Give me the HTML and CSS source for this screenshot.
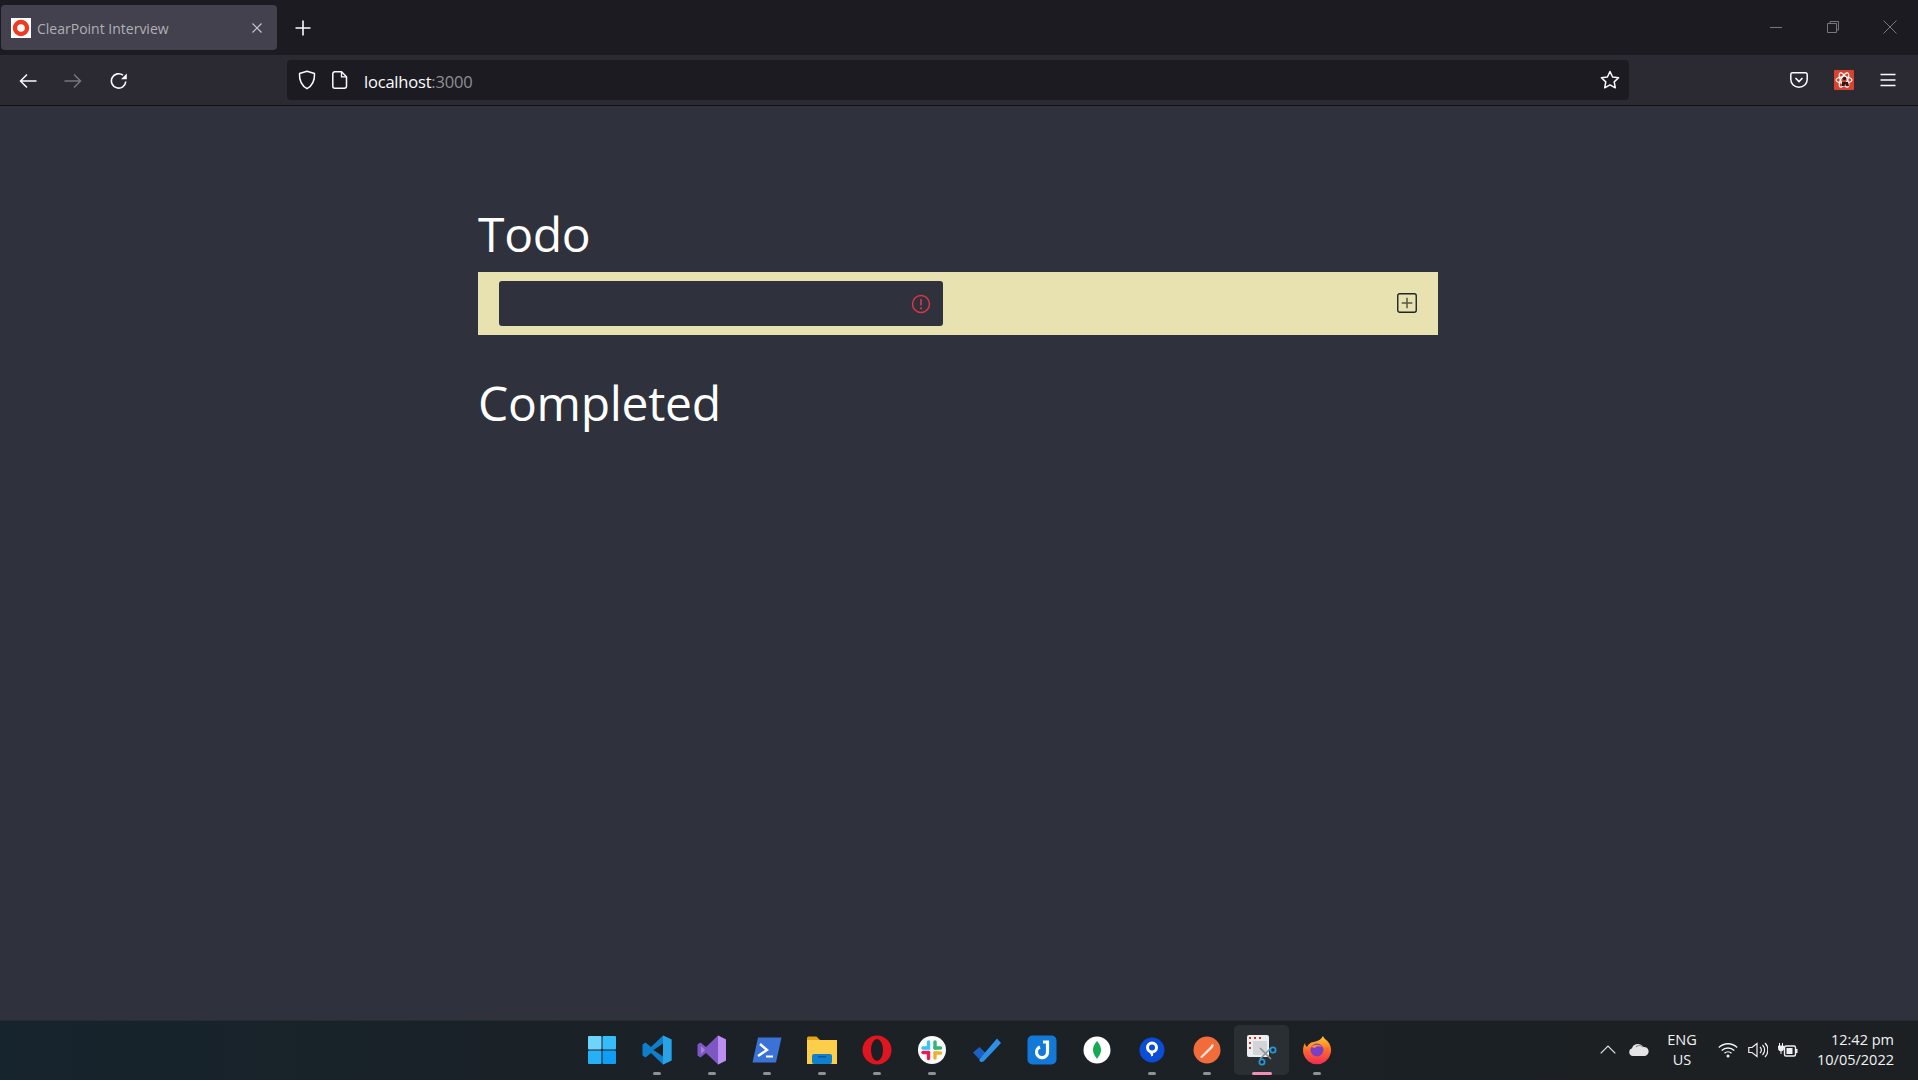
FILE: index.html
```html
<!DOCTYPE html>
<html lang="en">
<head>
<meta charset="utf-8">
<title>ClearPoint Interview</title>
<link rel="stylesheet" href="styles.css">
</head>
<body>
<div class="window">
  <header class="tabbar">
    <div class="tab">
      <span class="favicon"><svg width="20" height="20" viewBox="0 0 20 20"><rect width="20" height="20" fill="#fff"/><circle cx="10" cy="10" r="6" fill="none" stroke="#ee3a1f" stroke-width="4.4"/></svg></span>
      <span class="tab-title">ClearPoint Interview</span>
      <svg class="tab-close" width="12" height="12" viewBox="0 0 12 12"><path d="M1.5 1.5l9 9M10.5 1.5l-9 9" stroke="#c8c8cc" stroke-width="1.2"/></svg>
    </div>
    <svg class="new-tab" width="16" height="16" viewBox="0 0 16 16"><path d="M8 .5v15M.5 8h15" stroke="#fbfbfe" stroke-width="1.6"/></svg>
    <div class="window-controls">
      <svg width="14" height="14" viewBox="0 0 14 14"><path d="M1 7.5h12" stroke="#77777b" stroke-width="1"/></svg>
      <svg width="14" height="14" viewBox="0 0 14 14"><path d="M1.500 3.500h9v9h-9zM4 3.500V1.500h8.500v8.500h-2" fill="none" stroke="#77777b" stroke-width="1"/></svg>
      <svg width="14" height="14" viewBox="0 0 14 14"><path d="M.5.500l13 13M13.500.500l-13 13" stroke="#77777b" stroke-width="1"/></svg>
    </div>
  </header>
  <nav class="toolbar">
    <div class="nav-buttons">
      <svg width="18" height="16" viewBox="0 0 18 16"><path d="M17.500 8H1.500M8 1.500L1.500 8 8 14.500" fill="none" stroke="#fbfbfe" stroke-width="1.500"/></svg>
      <svg width="18" height="16" viewBox="0 0 18 16"><path d="M.5 8h16M10 1.500L16.500 8 10 14.500" fill="none" stroke="#77767c" stroke-width="1.500"/></svg>
      <svg class="reload" width="18" height="18" viewBox="0 0 18 18"><path d="M15.800 9.500A7.200 7.200 0 1 1 13 3.200" fill="none" stroke="#fbfbfe" stroke-width="1.600"/><path d="M16.800 1.500v5.800h-5.800z" fill="#fbfbfe"/></svg>
    </div>
    <div class="urlbar">
      <svg class="url-shield" width="18" height="20" viewBox="0 0 18 20"><path d="M9 1.200l7.500 2.300c.3 6.800-1.800 12-7.500 15.200C3.300 15.500 1.200 10.300 1.500 3.500z" fill="none" stroke="#fbfbfe" stroke-width="1.500" stroke-linejoin="round"/></svg>
      <svg class="url-doc" width="16" height="18" viewBox="0 0 16 18"><path d="M2.800.8h6.700l5 5v9.400a2 2 0 0 1-2 2H2.800a2 2 0 0 1-2-2V2.800a2 2 0 0 1 2-2z" fill="none" stroke="#fbfbfe" stroke-width="1.500"/><path d="M9.500.8v5h5" fill="none" stroke="#fbfbfe" stroke-width="1.300"/></svg>
      <span class="url-text">localhost<span class="url-port">:3000</span></span>
      <svg class="url-star" width="20" height="20" viewBox="0 0 20 20"><path d="M10 1.500l2.600 5.500 6 .8-4.400 4.100 1.100 5.900-5.300-2.900-5.300 2.900 1.100-5.900L1.400 7.800l6-.8z" fill="none" stroke="#fbfbfe" stroke-width="1.500" stroke-linejoin="round"/></svg>
    </div>
    <div class="toolbar-actions">
      <svg width="18" height="16" viewBox="0 0 18 16"><path d="M2.500.8h13a1.700 1.700 0 0 1 1.700 1.700v5a8.200 7.700 0 0 1-16.400 0v-5A1.700 1.700 0 0 1 2.500.8z" fill="none" stroke="#fbfbfe" stroke-width="1.500"/><path d="M5.500 6L9 9.500 12.500 6" fill="none" stroke="#fbfbfe" stroke-width="1.600"/></svg>
      <svg width="20" height="20" viewBox="0 0 20 20"><rect width="20" height="20" rx="1" fill="#d9422f"/><g fill="none" stroke="#fff" stroke-width="1.200"><ellipse cx="10" cy="10" rx="8" ry="3.200"/><ellipse cx="10" cy="10" rx="8" ry="3.200" transform="rotate(60 10 10)"/><ellipse cx="10" cy="10" rx="8" ry="3.200" transform="rotate(-60 10 10)"/></g><circle cx="10.500" cy="8.500" r="1.800" fill="#2a1a1a"/><path d="M8 12h6l1 4h-2.500l-1-2-1 2H8z" fill="#2a1a1a"/></svg>
      <svg width="16" height="14" viewBox="0 0 16 14"><path d="M.5 1.500h15M.5 7h15M.5 12.500h15" stroke="#fbfbfe" stroke-width="1.500"/></svg>
    </div>
  </nav>
  <main class="page">
    <section class="content">
      <h1 class="heading">Todo</h1>
      <form class="todo-row">
        <div class="todo-input">
          <svg width="20" height="20" viewBox="0 0 20 20"><circle cx="10" cy="10" r="8.500" fill="none" stroke="#dc3545" stroke-width="1.500"/><path d="M10 5v6.500" stroke="#dc3545" stroke-width="1.700"/><circle cx="10" cy="14.300" r="1.100" fill="#dc3545"/></svg>
        </div>
        <svg class="add-icon" width="20" height="20" viewBox="0 0 20 20"><rect x=".75" y=".75" width="18.500" height="18.500" rx="2" fill="none" stroke="#212529" stroke-width="1.400"/><path d="M10 4.700v10.600M4.700 10h10.600" stroke="#55554c" stroke-width="1.500"/></svg>
      </form>
      <h1 class="heading completed">Completed</h1>
    </section>
  </main>
  <footer class="taskbar">
    <div class="task-icons">
      <div class="task"><svg width="30" height="30" viewBox="0 0 30 30"><rect x="1" y="1" width="13.500" height="13.500" rx="1" fill="#6fd4fb"/><rect x="15.500" y="1" width="13.500" height="13.500" rx="1" fill="#35bdf9"/><rect x="1" y="15.500" width="13.500" height="13.500" rx="1" fill="#28b0f7"/><rect x="15.500" y="15.500" width="13.500" height="13.500" rx="1" fill="#109ef5"/></svg></div>
      <div class="task open"><svg width="30" height="30" viewBox="0 0 30 30"><path d="M21 .5L29.500 4.500v21L21 29.500 9 18 3.500 22.500.5 20.500v-11L3.500 7.500 9 12z" fill="#0f7fc9"/><path d="M21 .5l8.500 4v21l-8.500 4z" fill="#29a3e8"/><path d="M21 8.500L11.500 15l9.500 6.500z" fill="#1c1f24"/></svg></div>
      <div class="task open"><svg width="30" height="30" viewBox="0 0 30 30"><path d="M21 .5L29 4.500v21l-8 4L9 18 3.500 22.500.5 20.500v-11L3.500 7.500 9 12z" fill="#7d57c2"/><path d="M21 .5l8 4v21l-8 4z" fill="#bb8ef0"/><path d="M21 9l-7 6 7 6z" fill="#7d57c2"/><path d="M4 11l4 4-4 4z" fill="#a77fe0"/></svg></div>
      <div class="task open"><svg width="30" height="26" viewBox="0 0 30 26"><path d="M6 .5h23.500L24 25.500H.5z" fill="#3a72d6"/><path d="M8 7l7 6-9 6" fill="none" stroke="#fff" stroke-width="2.400"/><path d="M14 19.500h7" stroke="#fff" stroke-width="2"/></svg></div>
      <div class="task open"><svg width="30" height="28" viewBox="0 0 30 28"><path d="M0 2a1.500 1.500 0 0 1 1.500-1.500h8L13 4h17v24H0z" fill="#e2a513"/><rect y="4" width="30" height="24" fill="#fcce4a"/><rect x="5" y="18" width="20" height="10" rx="2" fill="#0f80cf"/><rect x="11" y="20" width="8" height="1.500" fill="#0a5a9a"/></svg></div>
      <div class="task open"><svg width="30" height="30" viewBox="0 0 30 30"><circle cx="15" cy="15" r="14.500" fill="#e0151f"/><ellipse cx="15" cy="15" rx="6" ry="11" fill="#1c1f24"/></svg></div>
      <div class="task open"><svg width="30" height="30" viewBox="0 0 30 30"><circle cx="15" cy="15" r="14" fill="#fbfbfb"/><g stroke-width="3.400" stroke-linecap="round"><path d="M11.500 7v6H6" stroke="#36c5f0" fill="none"/><path d="M18 7v6" stroke="#2eb67d"/><path d="M18 13h5.500" stroke="#2eb67d"/><path d="M18 18h5.500" stroke="#ecb22e"/><path d="M18 18v5" stroke="#ecb22e"/><path d="M11.500 17.500v6" stroke="#e01e5a"/><path d="M6 17.500h5.500" stroke="#e01e5a"/></g></svg></div>
      <div class="task"><svg width="30" height="26" viewBox="0 0 30 26"><path d="M1 15.500L7.500 10l6 6-6.500 6z" fill="#1e5fc4"/><path d="M7.500 22L25 1.500l4 4.500L12 24a3 3 0 0 1-4.500 0z" fill="#2d8fe6"/></svg></div>
      <div class="task"><svg width="30" height="30" viewBox="0 0 30 30"><rect x=".5" y=".5" width="29" height="29" rx="5" fill="#1279d8"/><path d="M16 7h4.500v10a5.500 5.500 0 1 1-7.500-5" fill="none" stroke="#fff" stroke-width="3.200"/></svg></div>
      <div class="task"><svg width="28" height="28" viewBox="0 0 28 28"><circle cx="14" cy="14" r="13.500" fill="#fff"/><path d="M14 5c3 3.500 4.200 6.500 4 9.500-.2 3.500-2.500 6-4 8.500-1.500-2.500-3.800-5-4-8.500C9.800 11.500 11 8.500 14 5z" fill="#13aa52"/></svg></div>
      <div class="task open"><svg width="26" height="26" viewBox="0 0 26 26"><circle cx="13" cy="13" r="12.500" fill="#0b4dd6"/><circle cx="13" cy="10.500" r="4.500" fill="none" stroke="#fff" stroke-width="3"/><path d="M10.500 15l2.500 5v-5z" fill="#fff"/><path d="M12 14h2v5h-2z" fill="#fff"/></svg></div>
      <div class="task open"><svg width="28" height="28" viewBox="0 0 28 28"><circle cx="14" cy="14" r="13.500" fill="#f26b3a"/><path d="M7 21l10-10 2-3 2 1-1.500 3L9 22z" fill="#fde6dc"/></svg></div>
      <div class="task active"><svg width="32" height="32" viewBox="0 0 32 32"><rect x="1" y="1" width="22" height="22" rx="2" fill="#eceff1"/><path d="M4 5V4h1M8 4h2M13 4h2M4 8v2M4 13v2" stroke="#d6361f" stroke-width="2" fill="none"/><rect x="7" y="7" width="14" height="14" rx="1" fill="#d2d5d8"/><path d="M14 14l11 11M25 14L14 25" stroke="#8b8f94" stroke-width="1.500"/><circle cx="27" cy="16" r="2.600" fill="#1c1f24" stroke="#1d9bd8" stroke-width="1.800"/><circle cx="16" cy="28" r="2.600" fill="#1c1f24" stroke="#1d9bd8" stroke-width="1.800"/></svg></div>
      <div class="task open"><svg width="30" height="30" viewBox="0 0 30 30"><defs><linearGradient id="ff" x1="0" y1="0" x2="0" y2="1"><stop offset="0" stop-color="#ffcf2e"/><stop offset=".5" stop-color="#ff6a2a"/><stop offset="1" stop-color="#f0295a"/></linearGradient></defs><path d="M21 1c1 3 4 4 6 7 2.500 4 2.500 8 1.500 11a14 14 0 0 1-27 0C.5 15 1 11 3 8c0 2 1 3 2 4 1-3 4-5 7-5 3-1 7-2 9-6z" fill="url(#ff)"/><circle cx="15" cy="15" r="6.500" fill="#7b3fc4"/><path d="M9 12c3-3 9-3 11 0-3-1-6-1-7 1z" fill="#ff8a2a"/></svg></div>
    </div>
    <div class="tray">
      <svg class="tray-chevron" width="16" height="9" viewBox="0 0 16 9"><path d="M.7 8.300L8 1l7.300 7.300" fill="none" stroke="#e8e8e8" stroke-width="1.200"/></svg>
      <svg class="tray-cloud" width="20" height="13" viewBox="0 0 20 13"><path d="M4 13a4 4 0 0 1-1-7.800A6 6 0 0 1 14 4a4.500 4.500 0 0 1 2 9z" fill="#e4e4e4"/><path d="M7 4a5 5 0 0 1 7 0" stroke="#9a9a9a" stroke-width="1.500" fill="none"/></svg>
      <div class="tray-lang"><span>ENG</span><span>US</span></div>
      <div class="tray-status">
        <svg width="20" height="16" viewBox="0 0 20 16"><g fill="none" stroke="#f0f0f0" stroke-width="1.400"><path d="M.8 5.500a13 13 0 0 1 18.400 0"/><path d="M3.700 8.500a9 9 0 0 1 12.600 0"/><path d="M6.500 11.300a5 5 0 0 1 7 0"/></g><circle cx="10" cy="14" r="1.500" fill="#f0f0f0"/></svg>
        <svg width="20" height="16" viewBox="0 0 20 16"><g fill="none" stroke="#f0f0f0" stroke-width="1.200"><path d="M.8 5.500h3.200L9 1.500v13L4 10.500H.8z"/><path d="M12 5a4 4 0 0 1 0 6"/><path d="M14.500 3a7 7 0 0 1 0 10"/><path d="M17 1a10 10 0 0 1 0 14"/></g></svg>
        <svg width="20" height="16" viewBox="0 0 20 16"><rect x="6.500" y="4" width="11" height="10" rx="1.500" fill="#1c1f24" stroke="#f0f0f0" stroke-width="1.400"/><rect x="8.500" y="6" width="6" height="6" fill="#f0f0f0"/><rect x="18" y="7" width="1.500" height="4" fill="#f0f0f0"/><path d="M1.500 1v3M4.500 1v3M.5 4h5v2.500a2.500 2.500 0 0 1-5 0zM3 9v3" stroke="#f0f0f0" fill="#f0f0f0"/></svg>
      </div>
      <div class="tray-clock"><span>12:42 pm</span><span>10/05/2022</span></div>
    </div>
  </footer>
</div>
</body>
</html>
```
FILE: styles.css
```css
* { box-sizing: border-box; }
html, body { margin: 0; height: 100%; }
body { font-family: "Open Sans", "Noto Sans", sans-serif; background: #2f323c; overflow: hidden; }
svg { display: block; flex: none; }
.window { display: flex; flex-direction: column; height: 100vh; }

.tabbar { height: 55px; background: #1c1b22; display: flex; align-items: center; flex: none; padding: 0 21px 0 1px; }
.tab { width: 276px; height: 45px; background: #42414d; border-radius: 4px; display: flex; align-items: center; padding: 0 14px 0 10px; }
.favicon { margin-right: 6px; }
.tab-title { flex: 1; font-size: 14px; line-height: 20px; padding-top: 2px; color: #b0b0b5; white-space: nowrap; }
.new-tab { margin-left: 18px; }
.window-controls { margin-left: auto; margin-bottom: 2px; display: flex; gap: 43px; }

.toolbar { height: 51px; background: #2b2a33; border-bottom: 1px solid #0f0f12; display: flex; align-items: center; flex: none; padding: 0 22px 0 19px; }
.nav-buttons { display: flex; align-items: center; gap: 27px; width: 268px; padding-top: 2px; }
.reload { margin-left: 1px; margin-right: -1px; }
.urlbar { width: 1342px; height: 40px; background: #1c1b22; border-radius: 4px; display: flex; align-items: center; padding: 0 9px 0 11px; }
.url-shield { margin-right: 16px; }
.url-doc { margin-right: 16px; }
.url-text { flex: 1; font-size: 16.5px; line-height: 24px; padding-top: 3px; color: #fbfbfe; letter-spacing: -.2px; }
.url-port { color: #8f8f94; }
.toolbar-actions { margin-left: auto; display: flex; align-items: center; gap: 26px; }

.page { flex: 1; padding: 0 2px 0 0; display: flex; justify-content: center; min-height: 0; }
.content { width: 960px; padding-top: 100px; }
.heading { margin: 0; font-weight: 400; font-size: 48px; line-height: 56px; color: #fff; letter-spacing: -.3px; }
.completed { margin-top: 40px; }
.todo-row { height: 63px; margin-top: 10px; background: #e7e2b0; display: flex; align-items: center; justify-content: space-between; padding: 0 21px; }
.todo-input { width: 444px; height: 45px; background: #2f323c; border-radius: 3px; display: flex; align-items: center; justify-content: flex-end; padding-right: 12px; }
.add-icon { margin-bottom: 1px; }

.taskbar { height: 60px; flex: none; background: linear-gradient(90deg, #16242d 0%, #1b2126 35%, #1c2023 100%); border-top: 1px solid #262a31; position: relative; display: flex; align-items: center; justify-content: flex-end; padding-right: 24px; }
.task-icons { position: absolute; left: 574px; top: 0; bottom: 2px; display: flex; align-items: center; }
.task { width: 55px; height: 50px; display: flex; align-items: center; justify-content: center; position: relative; border-radius: 5px; }
.task.open::after, .task.active::after { content: ""; position: absolute; bottom: 0; left: 50%; width: 8px; height: 3px; margin-left: -4px; border-radius: 2px; background: #8f9193; }
.task.active { background: #2a2f34; }
.task.active::after { width: 20px; margin-left: -10px; background: #ef8fb8; }
.tray { display: flex; align-items: center; color: #f2f2f2; font-size: 14.5px; line-height: 20px; margin-bottom: 2px; }
.tray-chevron { margin-right: 13px; }
.tray-cloud { margin-right: 15px; }
.tray-lang { display: flex; flex-direction: column; align-items: center; width: 36px; }
.tray-status { display: flex; gap: 10px; margin-left: 18px; }
.tray-clock { display: flex; flex-direction: column; align-items: flex-end; margin-left: 19px; }
```
